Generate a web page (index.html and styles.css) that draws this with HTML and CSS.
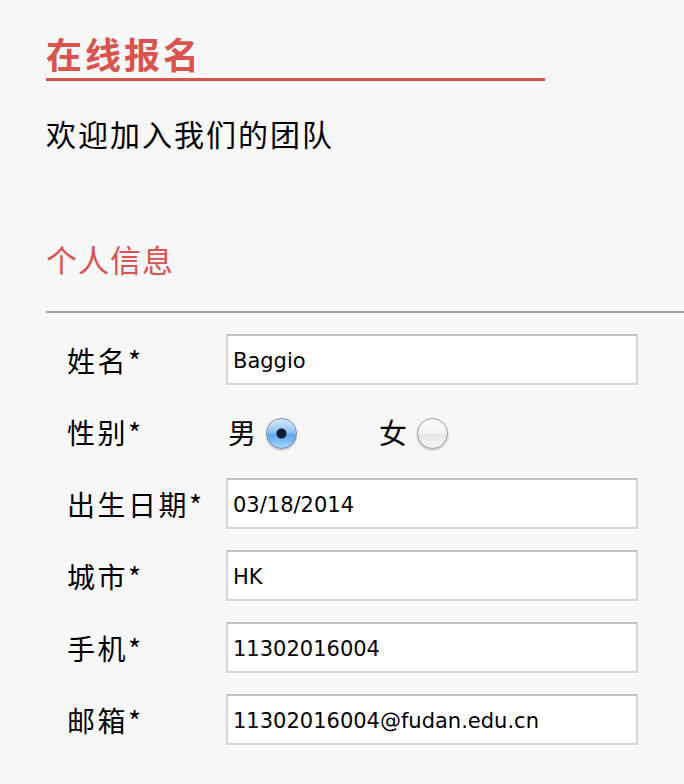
FILE: index.html
```html
<!DOCTYPE html>
<html lang="zh-CN">
<head>
<meta charset="utf-8">
<title>在线报名</title>
<link rel="stylesheet" href="styles.css">
</head>
<body>
<div class="page">
  <header class="hero">
    <h1 class="title">在线报名</h1>
    <p class="welcome">欢迎加入我们的团队</p>
  </header>
  <section class="section">
    <h2 class="section-title">个人信息</h2>
    <form class="form">
      <label class="label" for="name">姓名*</label>
      <input class="field" id="name" type="text" value="Baggio">

      <span class="label">性别*</span>
      <div class="options">
        <label class="option">男<input class="radio" type="radio" name="gender" checked></label>
        <label class="option">女<input class="radio" type="radio" name="gender"></label>
      </div>

      <label class="label" for="birth">出生日期*</label>
      <input class="field" id="birth" type="text" value="03/18/2014">

      <label class="label" for="city">城市*</label>
      <input class="field" id="city" type="text" value="HK">

      <label class="label" for="phone">手机*</label>
      <input class="field" id="phone" type="text" value="11302016004">

      <label class="label" for="mail">邮箱*</label>
      <input class="field" id="mail" type="text" value="11302016004@fudan.edu.cn">
    </form>
  </section>
</div>
</body>
</html>
```
FILE: styles.css
```css
html, body {
  margin: 0;
  background: #f7f7f7;
}

body {
  font-family: "Noto Sans CJK SC", "Noto Sans", sans-serif;
  color: #000;
}

.page {
  padding: 30px 0 0 46px;
}

.title {
  margin: 0;
  width: 499px;
  font-size: 36px;
  line-height: 46px;
  font-weight: 700;
  letter-spacing: 3px;
  color: #d9534f;
  padding-bottom: 2px;
  border-bottom: 3px solid #d9534f;
}

.welcome {
  margin: 32px 0 0;
  font-size: 30px;
  line-height: 40px;
  letter-spacing: 2px;
}

.section-title {
  margin: 86px 0 0;
  font-size: 31px;
  line-height: 40px;
  font-weight: 400;
  letter-spacing: 1px;
  color: #d9534f;
}

.form {
  margin-top: 32px;
  border-top: 2px solid #a2a2a2;
  padding: 21px 0 40px 21px;
  display: grid;
  grid-template-columns: 159px 412px;
  grid-auto-rows: 51px;
  row-gap: 21px;
  align-items: center;
}

.label {
  font-size: 28px;
  letter-spacing: 2.5px;
  line-height: 40px;
}

.field {
  box-sizing: border-box;
  width: 412px;
  height: 51px;
  margin: 0;
  padding: 3px 5px 0;
  border: 2px solid #d4d4d4;
  border-top-color: #c4c4c4;
  background: #fff;
  font-family: "DejaVu Sans", sans-serif;
  font-size: 21px;
  color: #000;
  outline: none;
}

.options {
  display: flex;
  align-items: center;
  padding-left: 2px;
}

.option {
  display: flex;
  align-items: center;
  gap: 10px;
  width: 151px;
  font-size: 28px;
  line-height: 40px;
}

.radio {
  -webkit-appearance: none;
  appearance: none;
  box-sizing: border-box;
  width: 31px;
  height: 31px;
  margin: 4px 0 0;
  border-radius: 50%;
  border: 1px solid #9c9c9c;
  background: linear-gradient(#ffffff, #f1f1f1 50%, #e4e4e4 51%, #f6f6f6);
  box-shadow: 0 1px 2px rgba(0, 0, 0, 0.3), inset 0 1px 1px rgba(255, 255, 255, 0.9);
}

.radio:checked {
  border-color: #6a86a8;
  background:
    radial-gradient(circle at 50% 50%, #0a1a36 0, #0a1a36 4.5px, rgba(10, 26, 54, 0) 5.5px),
    linear-gradient(#d3e8fb, #8fc2f3 45%, #5ea4ec 55%, #a9d5fb);
}
```
